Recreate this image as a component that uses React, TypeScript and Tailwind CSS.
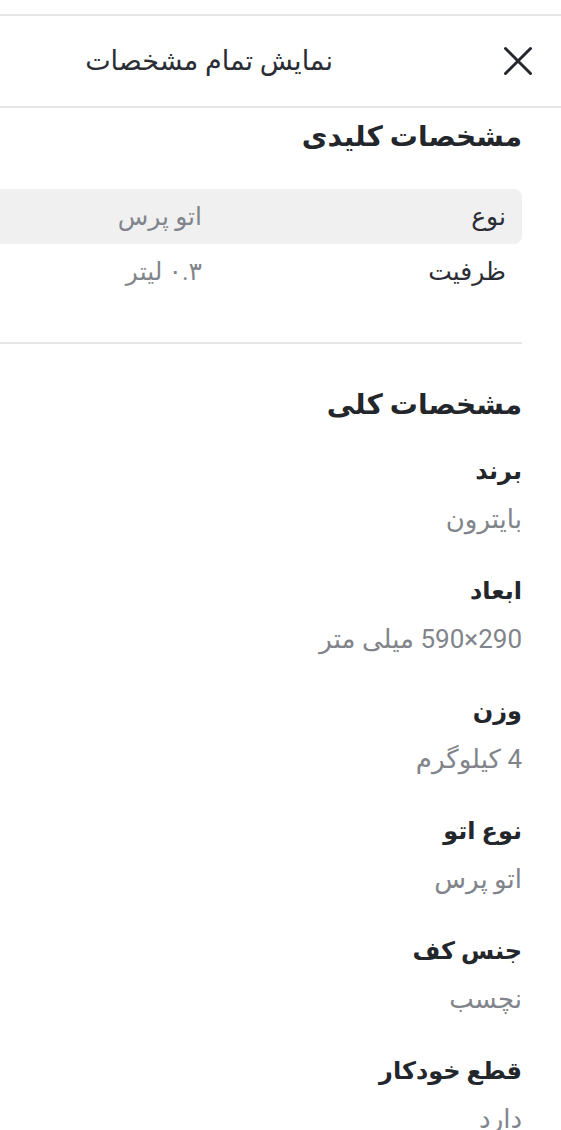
const keySpecs = [
  { label: "نوع", value: "اتو پرس" },
  { label: "ظرفیت", value: "۰.۳ لیتر" },
];

const generalSpecs = [
  { label: "برند", value: "بایترون" },
  { label: "ابعاد", value: "290×590 میلی متر" },
  { label: "وزن", value: "4 کیلوگرم" },
  { label: "نوع اتو", value: "اتو پرس" },
  { label: "جنس کف", value: "نچسب" },
  { label: "قطع خودکار", value: "دارد" },
];

function CloseIcon() {
  return (
    <svg width="30" height="30" viewBox="0 0 30 30" fill="none" stroke="#24272c" strokeWidth="3" strokeLinecap="round">
      <path d="M2.5 2.5 27.5 27.5M27.5 2.5 2.5 27.5" />
    </svg>
  );
}

export default function App() {
  return (
    <div
      dir="rtl"
      className="h-[1130px] overflow-hidden bg-white text-[#23254e]"
      style={{ fontFamily: "Roboto, 'DejaVu Sans', sans-serif" }}
    >
      <div className="h-[14px]" />
      <header className="flex h-[94px] items-center border-y-2 border-[#e6e6e6] pr-[28px]">
        <CloseIcon />
        <h1 className="mr-[170px] text-[27px] text-[#2a2d33]">نمایش تمام مشخصات</h1>
      </header>

      <div className="pr-[39px]">
        <section className="pt-[1px] pb-[43px]">
          <h2 className="text-[28px] font-semibold leading-[56px] text-[#23262b]">مشخصات کلیدی</h2>
          <div className="mt-[24px]">
            {keySpecs.map((s, i) => (
              <div
                key={s.label}
                className={
                  "grid h-[55px] grid-cols-[320px_1fr] items-center rounded-r-[8px] text-[25px] " +
                  (i === 0 ? "bg-[#f0f0f1]" : "")
                }
              >
                <span className="pr-[16px] text-[#2a2d33]">{s.label}</span>
                <span className="text-[#81858b]">{s.value}</span>
              </div>
            ))}
          </div>
        </section>

        <div className="h-[2px] bg-[#e6e6e6]" />

        <section className="pt-[33px]">
          <h2 className="text-[28px] font-semibold leading-[56px] text-[#23262b]">مشخصات کلی</h2>
          <div className="mt-[10px] flex flex-col">
            {generalSpecs.map((s) => (
              <div key={s.label} className="flex h-[120px] flex-col">
                <span className="text-[24px] font-semibold leading-[56px] text-[#23262b]">{s.label}</span>
                <span className="text-[26px] leading-[40px] text-[#81858b]">{s.value}</span>
              </div>
            ))}
          </div>
        </section>
      </div>
    </div>
  );
}
